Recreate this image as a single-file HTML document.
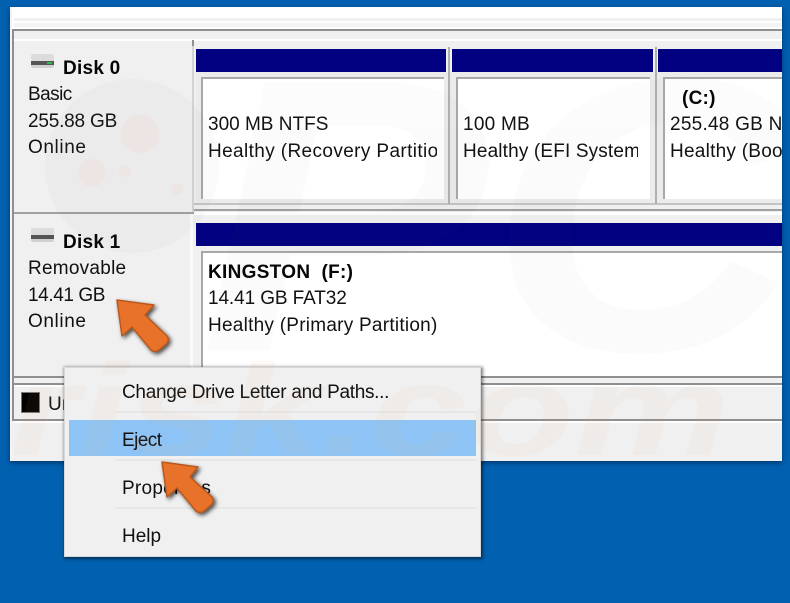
<!DOCTYPE html>
<html><head><meta charset="utf-8"><style>
html,body{margin:0;padding:0}
#r{position:relative;width:790px;height:603px;overflow:hidden;background:#0161b0;font-family:"Liberation Sans",sans-serif;color:#111}
#r div{position:absolute}
.t{font-size:19px;line-height:24px;white-space:nowrap;letter-spacing:.25px}
.b{font-weight:bold;color:#050505}
.bar{background:#000080;height:23px;top:49px}
.box{background:#fff;border-left:2px solid #a8a8a8;border-top:2px solid #a8a8a8}
.sep{height:2px;background:#e6e6e6}
</style></head><body><div id="r">
<div style="left:10px;top:7px;width:772px;height:454px;background:#f0f0f0;box-shadow:0 2px 5px rgba(0,20,50,.55)"></div>
<div style="left:10px;top:7px;width:772px;height:22px;background:#fff"></div>
<div style="left:14px;top:18px;width:768px;height:3px;background:#f0f0f0"></div>
<div style="left:14px;top:23px;width:768px;height:4px;background:#f3f3f3"></div>
<div style="left:12px;top:29px;width:770px;height:2px;background:#8f8f8f"></div>
<div style="left:10px;top:7px;width:2px;height:454px;background:#f4f4f4"></div>
<div style="left:12px;top:29px;width:2px;height:392px;background:#8f8f8f"></div>

<div style="left:14px;top:39px;width:768px;height:2px;background:#fff"></div>
<div style="left:14px;top:41px;width:178px;height:171px;background:#f0f0f0"></div>
<div style="left:192px;top:40px;width:2px;height:172px;background:#d4d4d4"></div>
<div style="left:192px;top:40px;width:2px;height:6px;background:#909090"></div>
<div style="left:14px;top:212px;width:180px;height:2px;background:#a0a0a0"></div>
<div style="left:190px;top:214px;width:3px;height:153px;background:#fafafa"></div>
<div style="left:194px;top:209px;width:588px;height:2px;background:#a0a0a0"></div>
<div style="left:194px;top:212px;width:588px;height:3px;background:#fff"></div>
<div style="left:196px;top:72px;width:586px;height:131px;background:#ebebeb"></div>
<div style="left:194px;top:203px;width:588px;height:2px;background:#c4c4c4"></div>

<div class="bar" style="left:196px;width:250px"></div>
<div class="bar" style="left:452px;width:201px"></div>
<div class="bar" style="left:658px;width:124px"></div>
<div style="left:448px;top:47px;width:2px;height:157px;background:#b0b0b0"></div>
<div style="left:655px;top:47px;width:2px;height:157px;background:#b0b0b0"></div>

<div class="box" style="left:201px;top:77px;width:241px;height:120px"></div>
<div class="box" style="left:456px;top:77px;width:192px;height:120px"></div>
<div class="box" style="left:663px;top:77px;width:117px;height:120px"></div>

<div class="t" style="left:208px;top:113px;letter-spacing:0">300 MB NTFS</div>
<div class="t" style="left:208px;top:140px;width:229px;overflow:hidden;letter-spacing:.38px">Healthy (Recovery Partition)</div>
<div class="t" style="left:463px;top:113px">100 MB</div>
<div class="t" style="left:463px;top:140px;width:175px;overflow:hidden;letter-spacing:.15px">Healthy (EFI System Partition)</div>
<div class="t b" style="left:682px;top:87px">(C:)</div>
<div class="t" style="left:670px;top:113px;width:112px;overflow:hidden">255.48 GB NTFS</div>
<div class="t" style="left:670px;top:140px;width:112px;overflow:hidden">Healthy (Boot, Page)</div>

<div class="t b" style="left:63px;top:57px">Disk 0</div>
<div class="t" style="left:28px;top:83px;letter-spacing:-.55px">Basic</div>
<div class="t" style="left:28px;top:110px;letter-spacing:-.2px">255.88 GB</div>
<div class="t" style="left:28px;top:136px;letter-spacing:.6px">Online</div>
<div style="left:31px;top:54px;width:23px;height:14px;background:linear-gradient(#dcdcdc 0 7px,#555 7px 11px,#d0d0d0 11px);border-radius:2px"></div>
<div style="left:47px;top:62px;width:5px;height:2px;background:#22c04a"></div>

<div class="bar" style="left:196px;top:223px;width:586px"></div>
<div class="box" style="left:201px;top:251px;width:579px;height:125px"></div>
<div class="t b" style="left:208px;top:261px;letter-spacing:.3px">KINGSTON&nbsp;&nbsp;(F:)</div>
<div class="t" style="left:208px;top:287px;letter-spacing:-.1px">14.41 GB FAT32</div>
<div class="t" style="left:208px;top:314px">Healthy (Primary Partition)</div>

<div class="t b" style="left:63px;top:231px">Disk 1</div>
<div class="t" style="left:28px;top:257px">Removable</div>
<div class="t" style="left:28px;top:284px;letter-spacing:-.4px">14.41 GB</div>
<div class="t" style="left:28px;top:310px;letter-spacing:.6px">Online</div>
<div style="left:31px;top:228px;width:23px;height:14px;background:linear-gradient(#dcdcdc 0 7px,#555 7px 11px,#d0d0d0 11px);border-radius:2px"></div>

<div style="left:14px;top:385px;width:768px;height:34px;background:#f0f0f0"></div>
<div style="left:14px;top:376px;width:768px;height:2px;background:#8f8f8f"></div>
<div style="left:14px;top:383px;width:768px;height:2px;background:#8f8f8f"></div>
<div style="left:14px;top:385px;width:768px;height:2px;background:#fff"></div>
<div style="left:12px;top:419px;width:770px;height:2px;background:#8f8f8f"></div>
<div style="left:14px;top:421px;width:768px;height:2px;background:#fff"></div>
<div style="left:22px;top:393px;width:17px;height:19px;background:#000;box-shadow:0 0 0 1px #777"></div>
<div class="t" style="left:48px;top:393px">Un</div>

<div style="left:64px;top:367px;width:417px;height:190px;background:#f0f0f0;box-shadow:1px 1px 3px 1px rgba(0,0,0,.5);border:1px solid #d8d8d8;box-sizing:border-box"></div>
<div class="sep" style="left:116px;top:411px;width:360px"></div>
<div style="left:69px;top:420px;width:407px;height:36px;background:#8ec4f5"></div>
<div class="sep" style="left:116px;top:459px;width:360px"></div>
<div class="sep" style="left:116px;top:507px;width:360px"></div>
<div class="t" style="left:122px;top:381px;letter-spacing:-.3px">Change Drive Letter and Paths...</div>
<div class="t" style="left:122px;top:429px;letter-spacing:-.55px">Eject</div>
<div class="t" style="left:122px;top:477px">Properties</div>
<div class="t" style="left:122px;top:525px;letter-spacing:0">Help</div>

<svg style="position:absolute;left:0;top:0" width="790" height="603" viewBox="0 0 790 603">
<defs>
<clipPath id="w"><path d="M10 7H782V461H481V557H64V461H10Z"/></clipPath>
<filter id="s" x="-30%" y="-30%" width="170%" height="170%"><feDropShadow dx="2" dy="2" stdDeviation="2" flood-color="#000" flood-opacity=".7"/></filter>
</defs>
<g clip-path="url(#w)">
<circle cx="132" cy="166" r="87" fill="#8a8a8a" opacity=".045"/>
<circle cx="140" cy="134" r="19" fill="#f5b49a" opacity=".1"/>
<circle cx="92" cy="173" r="14" fill="#f5b49a" opacity=".1"/>
<circle cx="125" cy="171" r="6" fill="#f5b49a" opacity=".1"/>
<circle cx="177" cy="189" r="6" fill="#f5b49a" opacity=".1"/>
<text x="200" y="350" font-family="Liberation Sans" font-size="390" font-weight="bold" font-style="italic" fill="#777" opacity=".025" textLength="600" lengthAdjust="spacingAndGlyphs">PC</text>
<text x="10" y="455" font-family="Liberation Sans" font-size="130" font-weight="bold" font-style="italic" fill="#eda36f" opacity=".055" textLength="720" lengthAdjust="spacingAndGlyphs">risk.com</text>
</g>
<path d="M117 300 L154 305 L145 315 L167 336 Q170 340 166 344 L159 350 Q155 353 151 350 L132 327 L122 336 Z" fill="#e97229" stroke="#b8591f" stroke-width="1.5" stroke-linejoin="round" filter="url(#s)"/>
<path d="M162 462 L198 467 L190 477 L212 497 Q215 501 211 505 L204 511 Q200 514 196 511 L177 488 L167 497 Z" fill="#e97229" stroke="#b8591f" stroke-width="1.5" stroke-linejoin="round" filter="url(#s)"/>
</svg>
</div></body></html>
